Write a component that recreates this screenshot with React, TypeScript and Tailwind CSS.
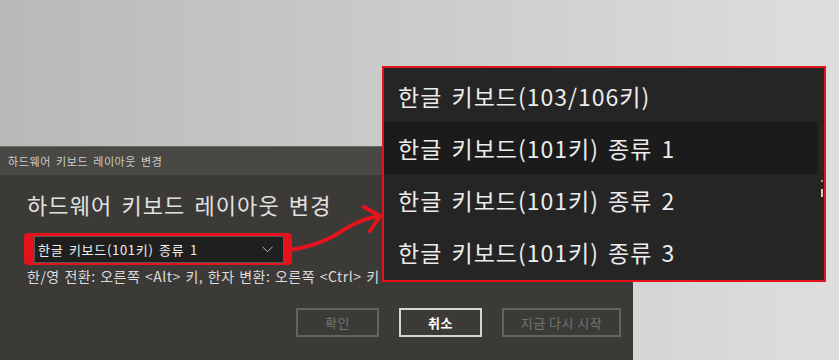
const font = "font-['Noto_Sans_CJK_KR','Noto_Sans',sans-serif]";

const options = [
  '한글 키보드(103/106키)',
  '한글 키보드(101키) 종류 1',
  '한글 키보드(101키) 종류 2',
  '한글 키보드(101키) 종류 3',
];

const App = () => {
  return (
    <div className={`relative h-[360px] w-[839px] overflow-hidden bg-gradient-to-r from-[#b9b9b9] to-[#dedede] ${font}`}>
      <div className="flex h-full flex-col pt-[146px]">
        {/* dialog */}
        <div className="flex w-[633px] flex-1 flex-col border-t border-[#6b6967] bg-[#3c3a37]">
          <div className="flex h-[28px] items-center bg-[#4a4845] pl-[8px] text-[11px] tracking-[0.6px] text-[#cdcdcd] [word-spacing:2px]">
            하드웨어 키보드 레이아웃 변경
          </div>
          <div className="flex flex-1 flex-col px-[27px] pt-[14px]">
            <h1 className="text-[22px] leading-[31px] tracking-[1.1px] text-[#e2e2e2] [word-spacing:3px]">하드웨어 키보드 레이아웃 변경</h1>
            <div className="ml-[-3px] mt-[13px] w-[268px] rounded-[4px] border-b-[2px] border-l-[10px] border-r-[8px] border-t-[3px] border-[#e3121b]">
              <div className="flex h-[27px] items-center justify-between border border-[#5a5856] bg-[#1f1f1f] pl-[3px] pr-[10px] text-[13px] tracking-[0.7px] text-[#f0f0f0] [word-spacing:2px]">
                <span>한글 키보드(101키) 종류 1</span>
                <svg width="11" height="7" viewBox="0 0 11 7" fill="none">
                  <path d="M0.5 0.8 L5.5 5.8 L10.5 0.8" stroke="#bdbdbd" strokeWidth="1" />
                </svg>
              </div>
            </div>
            <p className="mt-[2px] whitespace-nowrap text-[14px] leading-[19px] tracking-[0.5px] text-[#dcdcdc] [word-spacing:1px]">
              한/영 전환: 오른쪽 &lt;Alt&gt; 키, 한자 변환: 오른쪽 &lt;Ctrl&gt; 키
            </p>
            <div className="mr-[-15px] mt-[22px] flex justify-end gap-[20px] text-[13px] tracking-[0.5px] [word-spacing:3px]">
              <button className="h-[29px] w-[83px] border-2 border-[#65635f] text-[#76746f]">확인</button>
              <button className="h-[29px] w-[83px] border-2 border-[#d4d4d4] font-bold text-white">취소</button>
              <button className="h-[29px] w-[119px] border-2 border-[#65635f] text-[#76746f]">지금 다시 시작</button>
            </div>
          </div>
        </div>
      </div>

      {/* red annotation arrow */}
      <svg className="absolute left-0 top-0" width="839" height="360" viewBox="0 0 839 360" fill="none">
        <path d="M289 250 C305 248 318 244 332 237 C346 229 356 220 379 216" stroke="#e5141c" strokeWidth="4" strokeLinecap="round" />
        <path d="M364 207 L380 216 L370 231" stroke="#e5141c" strokeWidth="4" strokeLinecap="round" strokeLinejoin="round" />
      </svg>

      {/* open dropdown list */}
      <div className="absolute left-[382px] top-[66px] w-[444px] border-2 border-[#e3121b] bg-[#252525] py-[2px] pr-[6px]">
        {options.map((o, i) => (
          <div
            key={o}
            className={`flex h-[52px] items-center pl-[14px] text-[23px] tracking-[1px] text-[#ececec] [word-spacing:3px] ${i === 1 ? 'bg-[#1b1b1b]' : ''}`}
          >
            {o}
          </div>
        ))}
        <div className="absolute right-[1px] top-[112px] h-[2px] w-[2px] bg-[#9a9a9a]" />
        <div className="absolute right-[1px] top-[121px] h-[8px] w-[2px] bg-[#d0d0d0]" />
      </div>
    </div>
  );
};

export default App;
